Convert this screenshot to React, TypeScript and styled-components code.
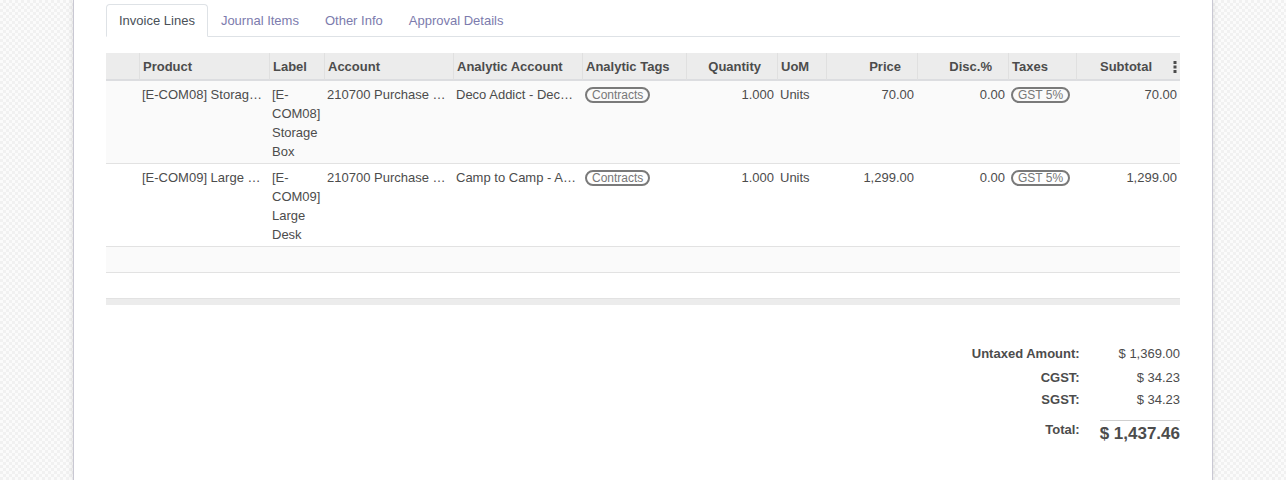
import React from "react";
import styled, { createGlobalStyle } from "styled-components";

const GlobalStyle = createGlobalStyle`
  html, body { margin: 0; padding: 0; }
  body {
    font-family: "Liberation Sans", Arial, sans-serif;
    font-size: 13px;
    color: #4c4c4c;
    background-color: #fbfbfb;
    background-image: repeating-conic-gradient(#f1f1f1 0 25%, #fbfbfb 0 50%);
    background-size: 6px 6px;
  }
  * { box-sizing: border-box; }
`;

const Sheet = styled.div`
  width: 1140px;
  min-height: 480px;
  margin: 0 auto;
  background: #fff;
  border-left: 1px solid #c9c8d3;
  border-right: 1px solid #c9c8d3;
  box-shadow: 0 0 6px rgba(0, 0, 0, 0.12);
  padding: 4px 32px 30px;
`;

const Nav = styled.ul`
  display: flex;
  list-style: none;
  margin: 0;
  padding: 0;
  border-bottom: 1px solid #dee2e6;
`;

const Tab = styled.li<{ $active?: boolean }>`
  margin-bottom: -1px;
  padding: 6px 12px;
  line-height: 19px;
  border: 1px solid ${(p) => (p.$active ? "#dee2e6" : "transparent")};
  border-bottom-color: ${(p) => (p.$active ? "#fff" : "transparent")};
  border-radius: 4px 4px 0 0;
  background: ${(p) => (p.$active ? "#fff" : "transparent")};
  color: ${(p) => (p.$active ? "#495057" : "#7c7bad")};
  cursor: pointer;
`;

const Table = styled.table`
  width: 100%;
  margin-top: 16px;
  table-layout: fixed;
  border-collapse: separate;
  border-spacing: 0;
`;

const Th = styled.th<{ $right?: boolean; $first?: boolean }>`
  background: #ececec;
  font-weight: bold;
  text-align: ${(p) => (p.$right ? "right" : "left")};
  padding: 4px ${(p) => (p.$right ? "16px" : "3px")} 2px 3px;
  line-height: 20px;
  border-left: ${(p) => (p.$first ? "none" : "1px solid #e0e0e0")};
  border-bottom: 2px solid #dcdde0;
  white-space: nowrap;
  overflow: hidden;
`;

const HeadInner = styled.div`
  display: flex;
  justify-content: flex-end;
  align-items: center;
  gap: 21px;
`;

const Row = styled.tr<{ $odd?: boolean }>`
  background: ${(p) => (p.$odd ? "#fafafa" : "#fff")};
`;

const Td = styled.td<{ $right?: boolean; $wrap?: boolean }>`
  padding: 4px 3px 2px;
  line-height: 19px;
  vertical-align: top;
  text-align: ${(p) => (p.$right ? "right" : "left")};
  border-bottom: 1px solid #e2e2e2;
  white-space: ${(p) => (p.$wrap ? "normal" : "nowrap")};
  overflow: hidden;
  text-overflow: ellipsis;
`;

const EmptyCell = styled.td`
  height: 26px;
  padding: 0;
  border-bottom: 1px solid #e2e2e2;
`;

const FootCell = styled.td`
  height: 6px;
  padding: 0;
  background: #ececec;
`;

const Badge = styled.span`
  display: inline-block;
  border: 2px solid #7a7a7a;
  border-radius: 10px;
  padding: 0 5px;
  font-size: 12px;
  line-height: 12px;
  color: #777;
  vertical-align: top;
  margin-top: 2px;
`;

const Totals = styled.div`
  display: grid;
  grid-template-columns: auto minmax(80px, auto);
  column-gap: 20px;
  justify-content: end;
  margin-top: 39px;
`;

const TotalLabel = styled.div<{ $gap?: number }>`
  font-weight: bold;
  text-align: right;
  line-height: 19px;
  padding-top: ${(p) => p.$gap ?? 0}px;
`;

const TotalValue = styled.div<{ $gap?: number }>`
  text-align: right;
  line-height: 19px;
  white-space: nowrap;
  padding-top: ${(p) => p.$gap ?? 0}px;
`;

const GrandValue = styled.div`
  margin-top: 11px;
  border-top: 1px solid #cfcfcf;
  padding-top: 1px;
  text-align: right;
  font-size: 17px;
  font-weight: bold;
  line-height: 24px;
  white-space: nowrap;
`;

const Kebab = () => (
  <svg width="4" height="12" viewBox="0 0 4 12" aria-hidden="true">
    <rect x="0.5" y="0" width="3" height="3" fill="#4c4c4c" />
    <rect x="0.5" y="4.5" width="3" height="3" fill="#4c4c4c" />
    <rect x="0.5" y="9" width="3" height="3" fill="#4c4c4c" />
  </svg>
);

const cols = [33, 130, 55, 129, 129, 104, 91, 49, 91, 91, 68, 104];

const lines = [
  {
    product: "[E-COM08] Storage Box",
    label: "[E-COM08] Storage Box",
    account: "210700 Purchase Expense",
    analytic: "Deco Addict - Deco Addict",
    price: "70.00",
    subtotal: "70.00",
  },
  {
    product: "[E-COM09] Large Desk",
    label: "[E-COM09] Large Desk",
    account: "210700 Purchase Expense",
    analytic: "Camp to Camp - Administrative",
    price: "1,299.00",
    subtotal: "1,299.00",
  },
];

export default function App() {
  return (
    <>
      <GlobalStyle />
      <Sheet>
        <Nav>
          <Tab $active>Invoice Lines</Tab>
          <Tab>Journal Items</Tab>
          <Tab>Other Info</Tab>
          <Tab>Approval Details</Tab>
        </Nav>
        <Table>
          <colgroup>
            {cols.map((w, i) => (
              <col key={i} style={{ width: w }} />
            ))}
          </colgroup>
          <thead>
            <tr>
              <Th $first />
              <Th>Product</Th>
              <Th>Label</Th>
              <Th>Account</Th>
              <Th>Analytic Account</Th>
              <Th>Analytic Tags</Th>
              <Th $right>Quantity</Th>
              <Th>UoM</Th>
              <Th $right>Price</Th>
              <Th $right>Disc.%</Th>
              <Th>Taxes</Th>
              <Th $right style={{ paddingRight: 3 }}>
                <HeadInner>
                  <span>Subtotal</span>
                  <Kebab />
                </HeadInner>
              </Th>
            </tr>
          </thead>
          <tbody>
            {lines.map((l, i) => (
              <Row key={i} $odd={i % 2 === 0}>
                <Td />
                <Td>{l.product}</Td>
                <Td $wrap>{l.label}</Td>
                <Td>{l.account}</Td>
                <Td>{l.analytic}</Td>
                <Td>
                  <Badge>Contracts</Badge>
                </Td>
                <Td $right>1.000</Td>
                <Td>Units</Td>
                <Td $right>{l.price}</Td>
                <Td $right>0.00</Td>
                <Td>
                  <Badge>GST 5%</Badge>
                </Td>
                <Td $right>{l.subtotal}</Td>
              </Row>
            ))}
            {[0, 1].map((i) => (
              <Row key={`e${i}`} $odd={i % 2 === 0}>
                <EmptyCell colSpan={12} />
              </Row>
            ))}
          </tbody>
          <tfoot>
            <tr>
              <FootCell colSpan={12} />
            </tr>
          </tfoot>
        </Table>
        <Totals>
          <TotalLabel>Untaxed Amount:</TotalLabel>
          <TotalValue>$ 1,369.00</TotalValue>
          <TotalLabel $gap={5}>CGST:</TotalLabel>
          <TotalValue $gap={5}>$ 34.23</TotalValue>
          <TotalLabel $gap={3}>SGST:</TotalLabel>
          <TotalValue $gap={3}>$ 34.23</TotalValue>
          <TotalLabel $gap={11}>Total:</TotalLabel>
          <GrandValue>$ 1,437.46</GrandValue>
        </Totals>
      </Sheet>
    </>
  );
}
